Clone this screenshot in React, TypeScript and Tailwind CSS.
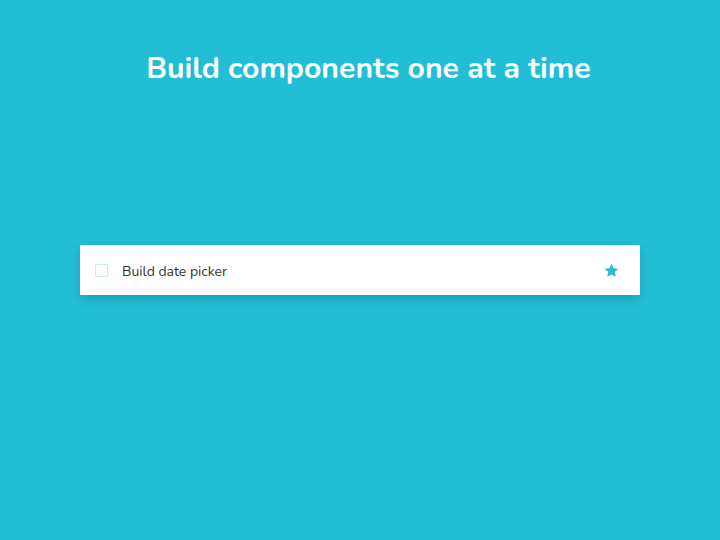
import React from "react";

export default function App() {
  return (
    <div className="w-[720px] h-[540px] bg-[#22bed6] flex flex-col items-center" style={{ fontFamily: '"Nunito", "Open Sans", "Noto Sans", sans-serif' }}>
      <h1 className="mt-[47px] pl-[17px] text-[30.2px] leading-[42px] font-bold text-white">Build components one at a time</h1>
      <div className="mt-[156px] w-[560px] h-[50px] bg-white flex items-center pl-[15px] pr-[20px] shadow-[0_4px_10px_rgba(0,0,0,0.18)]">
        <div className="w-[13px] h-[13px] border border-[#cfe9ee] rounded-[1px] bg-white mt-[1px]" />
        <span className="ml-[14px] text-[14px] text-[#333333] mt-[3px]">Build date picker</span>
        <div className="flex-1" />
        <svg width="17" height="17" viewBox="0 0 24 24" className="fill-[#26bcd3]">
          <path d="M12 2.5l2.9 6.2 6.8.8-5 4.7 1.3 6.7L12 17.6l-6 3.3 1.3-6.7-5-4.7 6.8-.8z" />
        </svg>
      </div>
    </div>
  );
}
